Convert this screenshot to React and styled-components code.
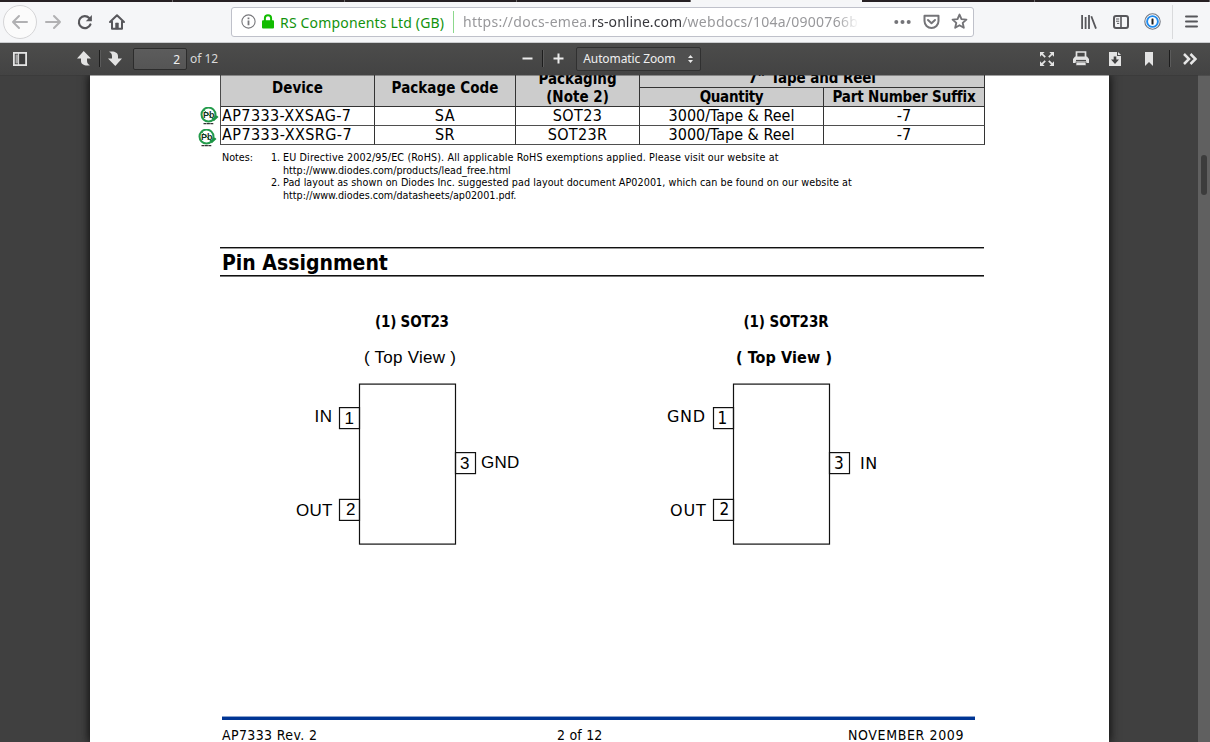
import React from "react";
import styled, { createGlobalStyle } from "styled-components";

const Global = createGlobalStyle`
  *, *::before, *::after { box-sizing: border-box; }
  html, body { margin: 0; height: 100%; overflow: hidden; background: #404040; }
  svg { display: block; flex: none; }
`;

const uiFont = '"Noto Sans", "Open Sans", sans-serif';
const docFont = '"DejaVu Sans Condensed", "DejaVu Sans", sans-serif';

/* ---------- browser chrome ---------- */

const Window = styled.div`
  display: flex;
  flex-direction: column;
  width: 1210px;
  height: 742px;
  overflow: hidden;
  font-family: ${uiFont};
`;

const TabStrip = styled.div`
  display: grid;
  grid-template-columns: 173px 172px 172px 174px 171px 173px 1fr;
  height: 2px;
`;

const Tab = styled.div`
  background: ${(p) => (p.$active ? "#f5f6f7" : "#262023")};
  border-right: 1px solid ${(p) => (p.$active ? "#f5f6f7" : "#6b6769")};
`;

const NavBar = styled.div`
  display: flex;
  align-items: center;
  height: 41px;
  padding: 0 0 1px 3px;
  background: #f5f6f8;
  border-bottom: 1px solid #cbcdcf;
`;

const BackButton = styled.div`
  display: flex;
  align-items: center;
  justify-content: center;
  width: 34px;
  height: 34px;
  border: 1px solid #d5d5d7;
  border-radius: 50%;
  background: #fbfbfb;
`;

const NavIcon = styled.div`
  display: flex;
  justify-content: center;
  width: ${(p) => p.$w || 32}px;
  margin-left: ${(p) => p.$gap || 0}px;
`;

const AddressBar = styled.div`
  display: flex;
  align-items: center;
  width: 743px;
  height: 30px;
  margin-left: 98px;
  padding-left: 9px;
  background: #fff;
  border: 1px solid #bfc1ca;
  border-radius: 3px;
  font-size: 14px;
  white-space: nowrap;
`;

const Identity = styled.span`
  width: 174px;
  height: 22px;
  margin-left: 6px;
  border-right: 1px solid #8cd88c;
  line-height: 24px;
  letter-spacing: 0.17px;
  color: #12920c;
`;

const Url = styled.span`
  width: 396px;
  margin-left: 9px;
  overflow: hidden;
  line-height: 24px;
  letter-spacing: 0.26px;
  color: #98989b;
  mask-image: linear-gradient(to right, #000 374px, transparent 396px);
`;

const Host = styled.span`
  color: #38383d;
  letter-spacing: 0.06px;
`;

const MenuDivider = styled.div`
  width: 1px;
  height: 34px;
  margin-left: 11px;
  background: #d9dadc;
`;

/* ---------- pdf toolbar ---------- */

const PdfBar = styled.div`
  display: flex;
  align-items: center;
  justify-content: space-between;
  height: 32px;
  flex: none;
  padding: 0 13px 1px;
  background: linear-gradient(#4c4c4b, #434343);
  box-shadow: 0 1px 0 #35353577;
  position: relative;
  z-index: 1;
  color: #d9d9d9;
  font-size: 12px;
`;

const Group = styled.div`
  display: flex;
  align-items: center;
`;

const Tool = styled.div`
  display: flex;
  margin-left: ${(p) => p.$gap || 0}px;
`;

const Split = styled.div`
  width: 2px;
  height: 17px;
  margin-left: ${(p) => p.$gap || 0}px;
  background: #1d1d1d;
  border-right: 1px solid #5b5b5b;
`;

const PageField = styled.div`
  width: 54px;
  height: 22px;
  margin: 0 3px 0 11px;
  padding-right: 6px;
  border: 1px solid #2c2c2c;
  border-radius: 2px;
  background: linear-gradient(#5c5c5c, #555);
  line-height: 21px;
  text-align: right;
  color: #f0f0f0;
`;

const ZoomSelect = styled.div`
  display: flex;
  align-items: center;
  justify-content: space-between;
  width: 125px;
  height: 24px;
  margin-left: 12px;
  padding: 0 7px 0 6px;
  border: 1px solid #303030;
  border-radius: 2px;
  background: #4f4f4f;
  letter-spacing: -0.1px;
  color: #efefef;
`;

/* ---------- document ---------- */

const Viewer = styled.div`
  display: flex;
  flex: 1;
  min-height: 0;
  background: #404040;
`;

const Sheet = styled.div`
  display: flex;
  flex-direction: column;
  width: 1019px;
  margin: 0 89px 0 90px;
  background: #fff;
  box-shadow: 0 0 9px 1px #0d0d0d;
  color: #000;
  font-family: ${docFont};
`;

const ScrollTrack = styled.div`
  display: flex;
  justify-content: center;
  width: 12px;
  padding-top: 80px;
  background: #606060;
`;

const Thumb = styled.div`
  width: 6px;
  height: 40px;
  border-radius: 3px;
  background: #3c3c3c;
`;

const TableBand = styled.div`
  display: flex;
  height: 70px;
`;

const BadgeColumn = styled.div`
  display: flex;
  flex-direction: column;
  align-items: flex-end;
  width: 130px;
  padding-top: 32px;
`;

const Badge = styled.div`
  margin-right: ${(p) => p.$inset}px;
  margin-bottom: 3px;
`;

const Table = styled.div`
  display: grid;
  grid-template-columns: 154px 141px 124px 184px 161px;
  grid-template-rows: 13px 19px 19px 19px;
  border-left: 1px solid #4a4a4a;
`;

const Cell = styled.div`
  display: flex;
  justify-content: ${(p) => (p.$start ? "flex-start" : "center")};
  padding-left: ${(p) => (p.$start ? 1 : 0)}px;
  border-right: 1px solid #333;
  border-bottom: 1px solid #4f4f4f;
  font-size: 16px;
  line-height: 18px;
  letter-spacing: ${(p) => p.$track || 0}px;
  white-space: nowrap;
`;

const HeadCell = styled(Cell)`
  flex-direction: column;
  align-items: center;
  justify-content: ${(p) => (p.$middle ? "center" : "flex-end")};
  grid-row: ${(p) => (p.$tall ? "span 2" : "auto")};
  grid-column: ${(p) => (p.$wide ? "span 2" : "auto")};
  padding-bottom: ${(p) => (p.$middle ? 5 : 0)}px;
  min-height: 0;
  border-bottom-color: #333;
  background: #ccc;
  font-size: 15px;
  font-weight: 700;
`;

const Notes = styled.div`
  display: grid;
  grid-template-columns: 49px 12px 1fr;
  margin: 7px 0 0 132px;
  font-size: 10.7px;
  line-height: 12.6px;
  white-space: nowrap;
`;

const NoteText = styled.div`
  letter-spacing: ${(p) => p.$track}px;
`;

const NoteLink = styled.div`
  letter-spacing: -0.01px;
`;

const SectionTitle = styled.h2`
  width: 764px;
  height: 29px;
  margin: 45px 0 0 130px;
  padding: 1px 0 0 2px;
  border: solid #111;
  border-width: 1px 0;
  box-shadow: 0 1px 0 #777, inset 0 1px 0 #999;
  font-size: 21px;
  font-weight: 700;
  line-height: 28px;
`;

const Diagrams = styled.div`
  display: flex;
  margin: 29px 0 0 130px;
`;

const PageFooter = styled.div`
  display: grid;
  grid-template-columns: 335px 291px 1fr;
  width: 753px;
  margin: 161px 0 0 132px;
  padding-top: 5px;
  border-top: 1px solid #8ba3cc;
  box-shadow: inset 0 3px 0 #003594;
  padding-top: 9px;
  font-size: 14px;
  line-height: 18px;
  white-space: nowrap;
`;

const FooterText = styled.span`
  letter-spacing: ${(p) => p.$track}px;
`;

/* ---------- icons ---------- */

const ink = "#57575b";

const Arrow = ({ flip }) => (
  <svg width="18" height="16" viewBox="0 0 18 16" fill="none" stroke="#b1b1b3" strokeWidth="2" strokeLinecap="round" strokeLinejoin="round">
    <path d={flip ? "M2 8H16M10 2L16 8L10 14" : "M16 8H2M8 2L2 8L8 14"} />
  </svg>
);

const Reload = () => (
  <svg width="18" height="18" viewBox="0 0 18 18" fill="none" stroke={ink} strokeWidth="2.2" strokeLinecap="round">
    <path d="M14.4 11.5A6 6 0 1 1 13.2 5" />
    <path d="M15.9 2V8.2H9.8Z" fill={ink} stroke="none" />
  </svg>
);

const Home = () => (
  <svg width="18" height="18" viewBox="0 0 18 18" fill="none" stroke={ink} strokeWidth="2" strokeLinecap="round" strokeLinejoin="round">
    <path d="M2 9L9 2.2L16 9M4 8.5V15.8H14V8.5" />
    <path d="M7.6 15.5V10H10.4V15.5Z" fill={ink} strokeWidth=".6" />
  </svg>
);

const Info = () => (
  <svg width="15" height="15" viewBox="0 0 15 15" fill="none" stroke="#78787c">
    <circle cx="7.5" cy="7.5" r="6.6" strokeWidth="1.1" />
    <path d="M7.5 6.6V11.2M7.5 3.6V5.3" strokeWidth="1.8" />
  </svg>
);

const Lock = () => (
  <svg width="12" height="15" viewBox="0 0 12 15">
    <path d="M2.9 7V4.3a3.1 3.1 0 0 1 6.2 0V7" fill="none" stroke="#12bc00" strokeWidth="2" />
    <rect y="6.2" width="12" height="8.3" rx="1" fill="#12bc00" />
  </svg>
);

const Dots = () => (
  <svg width="17" height="6" viewBox="0 0 17 6" fill="#747478">
    <circle cx="2.3" cy="3" r="2" /><circle cx="8.5" cy="3" r="2" /><circle cx="14.7" cy="3" r="2" />
  </svg>
);

const Pocket = () => (
  <svg width="17" height="16" viewBox="0 0 17 16" fill="none" stroke="#747478" strokeWidth="2" strokeLinecap="round" strokeLinejoin="round">
    <path d="M1.5 1.8H15.5V7a7 7 0 0 1-14 0Z" />
    <path d="M5 6L8.5 9.2L12 6" />
  </svg>
);

const Star = () => (
  <svg width="17" height="17" viewBox="0 0 17 17" fill="none" stroke="#747478" strokeWidth="1.9" strokeLinejoin="round">
    <path d="M8.5 1.6L10.5 6.1L15.4 6.6L11.7 9.9L12.8 14.8L8.5 12.3L4.2 14.8L5.3 9.9L1.6 6.6L6.5 6.1Z" />
  </svg>
);

const Library = () => (
  <svg width="16" height="16" viewBox="0 0 16 16" fill="none" stroke={ink} strokeWidth="1.8">
    <path d="M1.1 1V15M4.6 3V15M8 1V15M10.3 2.2L15 14.6" />
  </svg>
);

const SidebarIcon = () => (
  <svg width="16" height="14" viewBox="0 0 16 14" fill="none" stroke={ink}>
    <rect x="1" y="1" width="14" height="12" rx="2" strokeWidth="2" />
    <path d="M8 1V13" strokeWidth="1.6" />
    <path d="M3 4H6.2M3 6.2H6.2M4 8.4H6.2" strokeWidth="1" />
  </svg>
);

const OnePassword = () => (
  <svg width="17" height="17" viewBox="0 0 17 17">
    <circle cx="8.5" cy="8.5" r="7.7" fill="#fff" stroke="#717680" strokeWidth="1.1" />
    <circle cx="8.5" cy="8.5" r="5.4" fill="#fff" stroke="#1f8cf0" strokeWidth="1.9" />
    <rect x="7.5" y="5.6" width="2" height="5.8" rx=".5" fill="#222" />
  </svg>
);

const Hamburger = () => (
  <svg width="13" height="13" viewBox="0 0 13 13" stroke={ink} strokeWidth="2" strokeLinecap="round">
    <path d="M1 1.5H12M1 6.5H12M1 11.5H12" />
  </svg>
);

const PanelToggle = () => (
  <svg width="14" height="14" viewBox="0 0 14 14">
    <rect x=".9" y=".9" width="12.2" height="12.2" fill="#3d3d3d" stroke="#e3e3e3" strokeWidth="1.8" />
    <rect x="2.5" y="2.5" width="2.6" height="9" fill="#a5a5a5" />
    <path d="M5.6 1V13" stroke="#e3e3e3" />
  </svg>
);

const PageArrow = ({ down }) => (
  <svg width="14" height="15" viewBox="0 0 14 15" fill="#e3e3e3">
    <path d="M6.7 0L14 7.5H10V9.5C10 12 11 13.2 13 14.2C8 15.2 4 13.5 4 10V7.5H0Z" transform={down ? "rotate(180 7 7.5)" : undefined} />
  </svg>
);

const ZoomSign = ({ plus }) => (
  <svg width="11" height="11" viewBox="0 0 11 11" stroke="#ececec" strokeWidth="2">
    <path d={plus ? "M.5 5.5H10.5M5.5 .5V10.5" : "M.5 5.5H10.5"} />
  </svg>
);

const Updown = () => (
  <svg width="5" height="8" viewBox="0 0 5 8" fill="#e8e8e8">
    <path d="M0 3L2.5 0L5 3ZM0 5L2.5 8L5 5Z" />
  </svg>
);

const Expand = () => (
  <svg width="14" height="14" viewBox="0 0 15 15" fill="#e3e3e3" stroke="#e3e3e3" strokeWidth="1.9">
    <path d="M2 2L5.6 5.6M13 2L9.4 5.6M2 13L5.6 9.4M13 13L9.4 9.4" />
    <path stroke="none" d="M0 0H5L0 5ZM15 0V5L10 0ZM0 15V10L5 15ZM15 15H10L15 10Z" />
  </svg>
);

const Printer = () => (
  <svg width="16" height="15" viewBox="0 0 16 15">
    <path d="M3.5 6V1H12.5V6" fill="none" stroke="#e3e3e3" strokeWidth="1.7" />
    <path d="M2 5.5H14L16 8V12H0V8Z" fill="#e3e3e3" />
    <path d="M3 9.5H13" stroke="#4a4a4a" strokeWidth="1.2" />
    <rect x="3" y="11" width="10" height="3.6" fill="#e3e3e3" stroke="#4a4a4a" strokeWidth=".7" />
  </svg>
);

const Download = () => (
  <svg width="12" height="14" viewBox="0 0 12 14">
    <path d="M0 0H8V4H12V14H0Z" fill="#e3e3e3" />
    <path d="M9 0L12 3H9Z" fill="#e3e3e3" />
    <path d="M4.7 4.5H7.3V7.5H10L6 12L2 7.5H4.7Z" fill="#424242" />
  </svg>
);

const Bookmark = () => (
  <svg width="8" height="14" viewBox="0 0 8 14"><path d="M0 0H8V14L4 10L0 14Z" fill="#e3e3e3" /></svg>
);

const More = () => (
  <svg width="14" height="12" viewBox="0 0 14 12" fill="none" stroke="#e6e6e6" strokeWidth="2.5">
    <path d="M1 1L6 6L1 11M7.5 1L12.5 6L7.5 11" />
  </svg>
);

const LeadFree = () => (
  <svg width="19" height="19" viewBox="0 0 19 19">
    <circle cx="8.5" cy="7.6" r="7" fill="#fff" stroke="#239b4b" strokeWidth="2" />
    <path d="M3.6 2.8L13.4 12.4" stroke="#239b4b" strokeWidth="1" />
    <text x="3.1" y="11" fontFamily="Liberation Sans, sans-serif" fontSize="9" fontWeight="700" fill="#16351f">Pb</text>
    <path d="M11.2 10.4L13.8 14.2L18.5 10L16.6 8.2L14 11Z" fill="#1b9444" />
    <path d="M3.5 16.6H13.5" stroke="#333" strokeWidth="1.1" strokeDasharray="3 .4" />
  </svg>
);

/* ---------- pinout drawing ---------- */

const Pinout = ({ x, title, view, pins, sans }) => {
  const digits = sans ? '"Liberation Sans", sans-serif' : docFont;
  const labels = sans ? digits : '"DejaVu Sans", sans-serif';
  return (
    <svg width="374" height="250" viewBox={`${x} 305 374 250`} fontFamily={digits} fontSize="17">
      <text x={title.x} y="327" fontFamily={docFont} fontSize="15" fontWeight="700" letterSpacing={title.track}>{title.text}</text>
      <text x={view.x} y="363" fontSize={view.size} fontWeight={view.weight} letterSpacing={view.track}>( Top View )</text>
      <g fill="none" stroke="#111" strokeWidth="1.2">
        <rect x={x + 139.5} y="384.1" width="96" height="160" />
        <rect x={x + 119.5} y="407.6" width="20" height="21" />
        <rect x={x + 119.5} y="499.4" width="20" height="21" />
        <rect x={x + 235.5} y="452.6" width="20" height="21" />
      </g>
      {pins.map((p) => (
        <g key={p.n}>
          <text x={p.nx} y={p.ny}>{p.n}</text>
          <text x={p.x} y={p.y} fontFamily={labels} fontSize={sans ? 17 : 16} letterSpacing={p.track || 0}>{p.label}</text>
        </g>
      ))}
    </svg>
  );
};

const sot23 = [
  { n: "1", nx: 344.5, ny: 424, label: "IN", x: 314.6, y: 422, track: 0.4 },
  { n: "2", nx: 346, ny: 515, label: "OUT", x: 296, y: 516, track: 0.2 },
  { n: "3", nx: 460, ny: 469, label: "GND", x: 481, y: 468, track: 0.3 },
];

const sot23r = [
  { n: "1", nx: 717.5, ny: 424, label: "GND", x: 667, y: 422, track: 0.7 },
  { n: "2", nx: 719.5, ny: 515, label: "OUT", x: 670, y: 516, track: 0.8 },
  { n: "3", nx: 834, ny: 469, label: "IN", x: 860, y: 469, track: 0.6 },
];

const parts = [
  { device: "AP7333-XXSAG-7", code: "SA", pack: "SOT23", track: 0.4 },
  { device: "AP7333-XXSRG-7", code: "SR", pack: "SOT23R", track: 0.44 },
];

export default function App() {
  return (
    <Window>
      <Global />
      <TabStrip>
        <Tab /><Tab /><Tab /><Tab /><Tab $active /><Tab /><Tab />
      </TabStrip>
      <NavBar>
        <BackButton><Arrow /></BackButton>
        <NavIcon><Arrow flip /></NavIcon>
        <NavIcon><Reload /></NavIcon>
        <NavIcon><Home /></NavIcon>
        <AddressBar>
          <Info />
          <Tool $gap={6}><Lock /></Tool>
          <Identity>RS Components Ltd (GB)</Identity>
          <Url>https://docs-emea.<Host>rs-online.com</Host>/webdocs/104a/0900766b</Url>
          <NavIcon $w={17} $gap={35}><Dots /></NavIcon>
          <NavIcon $w={17} $gap={12}><Pocket /></NavIcon>
          <NavIcon $w={17} $gap={11}><Star /></NavIcon>
        </AddressBar>
        <NavIcon $w={16} $gap={107}><Library /></NavIcon>
        <NavIcon $w={16} $gap={16}><SidebarIcon /></NavIcon>
        <NavIcon $w={17} $gap={15}><OnePassword /></NavIcon>
        <MenuDivider />
        <NavIcon $w={13} $gap={12}><Hamburger /></NavIcon>
      </NavBar>

      <PdfBar>
        <Group>
          <Tool><PanelToggle /></Tool>
          <Tool $gap={50}><PageArrow /></Tool>
          <Split $gap={8} />
          <Tool $gap={7}><PageArrow down /></Tool>
          <PageField>2</PageField>
          of 12
          <Tool $gap={304}><ZoomSign /></Tool>
          <Split $gap={9} />
          <Tool $gap={9}><ZoomSign plus /></Tool>
          <ZoomSelect>Automatic Zoom<Updown /></ZoomSelect>
        </Group>
        <Group>
          <Tool><Expand /></Tool>
          <Tool $gap={19}><Printer /></Tool>
          <Tool $gap={20}><Download /></Tool>
          <Tool $gap={24}><Bookmark /></Tool>
          <Split $gap={16} />
          <Tool $gap={12}><More /></Tool>
        </Group>
      </PdfBar>

      <Viewer>
        <Sheet>
          <TableBand>
            <BadgeColumn>
              <Badge $inset={1}><LeadFree /></Badge>
              <Badge $inset={3}><LeadFree /></Badge>
            </BadgeColumn>
            <Table>
              <HeadCell $tall $middle>Device</HeadCell>
              <HeadCell $tall $middle $track={0.05}>Package Code</HeadCell>
              <HeadCell $tall><span>Packaging</span><span>(Note 2)</span></HeadCell>
              <HeadCell $wide $track={-0.1}>7” Tape and Reel</HeadCell>
              <HeadCell $track={-0.3}>Quantity</HeadCell>
              <HeadCell $track={-0.15}>Part Number Suffix</HeadCell>
              {parts.map((p) => (
                <React.Fragment key={p.device}>
                  <Cell $start $track={p.track}>{p.device}</Cell>
                  <Cell $track={0.5}>{p.code}</Cell>
                  <Cell $track={0.35}>{p.pack}</Cell>
                  <Cell>3000/Tape &amp; Reel</Cell>
                  <Cell>-7</Cell>
                </React.Fragment>
              ))}
            </Table>
          </TableBand>
          <Notes>
            <div>Notes:</div>
            <div>1.</div>
            <div>
              <NoteText $track={0.13}>EU Directive 2002/95/EC (RoHS). All applicable RoHS exemptions applied. Please visit our website at</NoteText>
              <NoteLink>http://www.diodes.com/products/lead_free.html</NoteLink>
            </div>
            <div />
            <div>2.</div>
            <div>
              <NoteText $track={0.065}>Pad layout as shown on Diodes Inc. suggested pad layout document AP02001, which can be found on our website at</NoteText>
              <NoteLink>http://www.diodes.com/datasheets/ap02001.pdf.</NoteLink>
            </div>
          </Notes>
          <SectionTitle>Pin Assignment</SectionTitle>
          <Diagrams>
            <Pinout x={220} sans title={{ x: 375, text: "(1) SOT23", track: -0.2 }} view={{ x: 364, size: 17, weight: 400, track: 0.25 }} pins={sot23} />
            <Pinout x={594} title={{ x: 743.5, text: "(1) SOT23R", track: -0.1 }} view={{ x: 736, size: 16, weight: 700, track: 0.1 }} pins={sot23r} />
          </Diagrams>
          <PageFooter>
            <FooterText $track={0.37}>AP7333 Rev. 2</FooterText>
            <FooterText $track={0.2}>2 of 12</FooterText>
            <FooterText $track={0.63}>NOVEMBER 2009</FooterText>
          </PageFooter>
        </Sheet>
        <ScrollTrack><Thumb /></ScrollTrack>
      </Viewer>
    </Window>
  );
}
